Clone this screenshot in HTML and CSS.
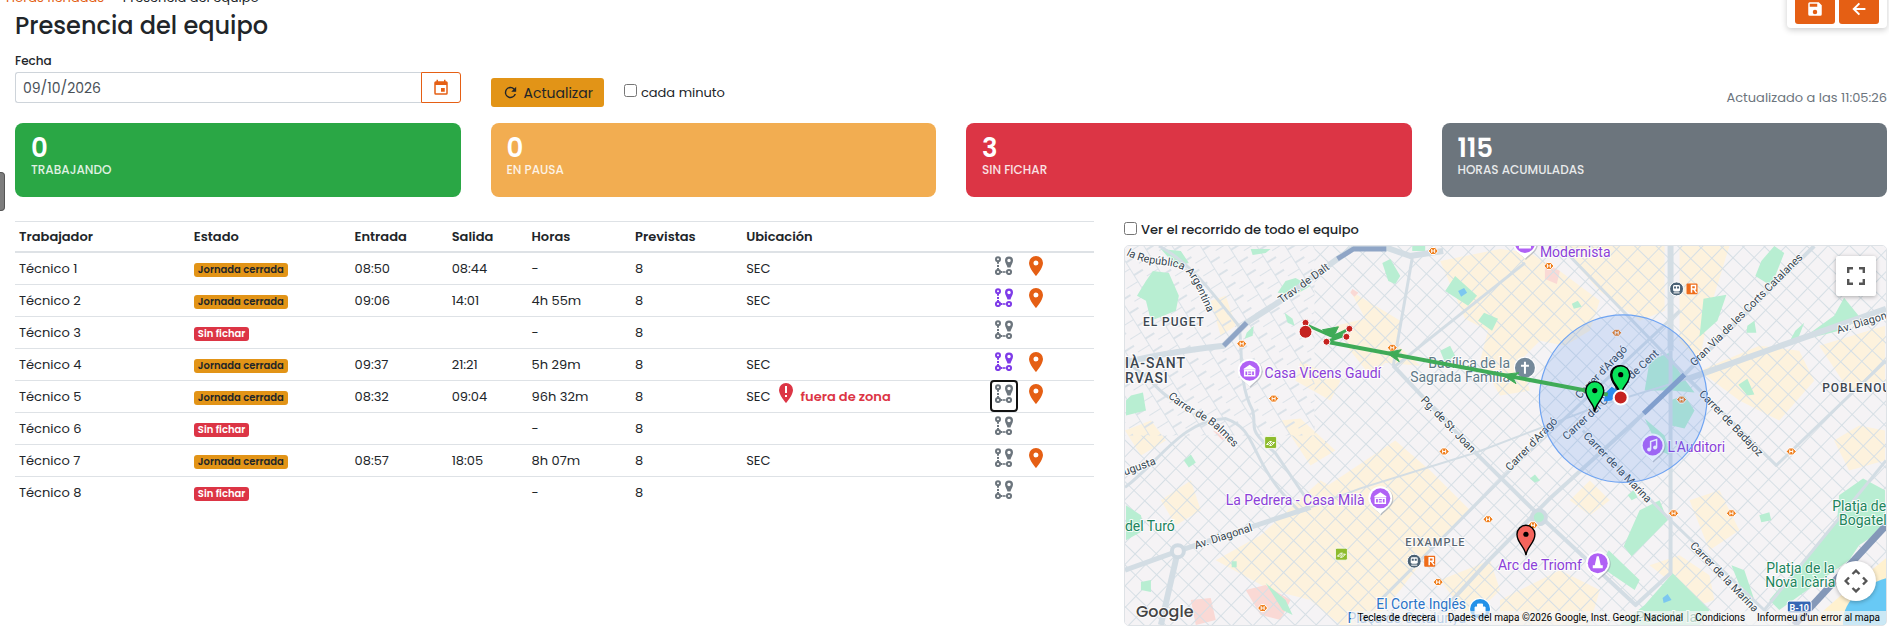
FILE: index.html
```html
<!DOCTYPE html>
<html lang="es">
<head>
<meta charset="utf-8">
<title>Presencia del equipo</title>
<link rel="stylesheet" href="styles.css">
</head>
<body>
<svg class="sprite" aria-hidden="true">
  <symbol id="i-pin" viewBox="5 2 14 20"><path fill="currentColor" d="M12 11.5A2.5 2.5 0 1 1 12 6.5a2.5 2.5 0 0 1 0 5M12 2a7 7 0 0 0-7 7c0 5.25 7 13 7 13s7-7.75 7-13a7 7 0 0 0-7-7z"/></symbol>
  <symbol id="i-alert" viewBox="5 2 14 20"><path fill="currentColor" d="M12 2a7 7 0 0 0-7 7c0 5.25 7 13 7 13s7-7.75 7-13a7 7 0 0 0-7-7z"/><path fill="#fff" d="M11 5h2v7h-2zM11 14h2v2h-2z"/></symbol>
  <symbol id="i-route" viewBox="0 0 18 19"><g fill="none" stroke="currentColor" stroke-width="2"><circle cx="3" cy="3.2" r="2"/><circle cx="3" cy="16" r="2.1"/><circle cx="14" cy="16" r="2.1"/><path d="M3 5.500v2.200M3 9v2M3 12v2M6 16h1.500M8.200 16h1.600M10.500 16h1.500" stroke-width="2"/></g><path fill="currentColor" fill-rule="evenodd" d="M14 0.4a4 4 0 0 0-4 4c0 2.600 2 4.200 2.500 7.200h3C16 8.600 18 7 18 4.400a4 4 0 0 0-4-4zm0 2.400a1.700 1.700 0 1 1 0 3.400 1.700 1.700 0 0 1 0-3.400z"/></symbol>
</svg>

<main class="page">
  <header class="head">
    <nav class="crumbs"><a href="#">Horas fichadas</a><span class="sep">·</span><span>Presencia del equipo</span></nav>
    <h1>Presencia del equipo</h1>
    <div class="toolbar">
      <button type="button" class="tool" aria-label="Guardar"><svg viewBox="0 0 24 24" width="18" height="18"><path fill="currentColor" d="M15 9H5V5h10m-3 14a3 3 0 1 1 0-6 3 3 0 0 1 0 6m5-16H5a2 2 0 0 0-2 2v14a2 2 0 0 0 2 2h14a2 2 0 0 0 2-2V7z"/></svg></button>
      <button type="button" class="tool" aria-label="Volver"><svg viewBox="0 0 24 24" width="18" height="18"><path fill="none" stroke="currentColor" stroke-width="2.600" d="M20.500 12H6M12.500 4.500 5 12l7.500 7.500"/></svg></button>
    </div>
  </header>

  <section class="grid filters">
    <div class="field">
      <label for="fecha">Fecha</label>
      <div class="date"><input id="fecha" type="text" value="09/10/2026"><button type="button" aria-label="Abrir calendario"><svg viewBox="0 0 24 24" width="18" height="18"><path fill="currentColor" d="M19 19H5V8h14m-3-7v2H8V1H6v2H5a2 2 0 0 0-2 2v14a2 2 0 0 0 2 2h14a2 2 0 0 0 2-2V5a2 2 0 0 0-2-2h-1V1m-1 11h-5v5h5z"/></svg></button></div>
    </div>
    <div class="refresh">
      <button type="button" class="btn"><svg viewBox="0 0 24 24" width="17" height="17"><path fill="currentColor" d="M17.650 6.350A8 8 0 1 0 19.730 14h-2.080A6 6 0 1 1 12 6c1.660 0 3.140.690 4.220 1.780L13 11h7V4z"/></svg>Actualizar</button>
      <label class="check"><input type="checkbox">cada minuto</label>
    </div>
    <p class="updated">Actualizado a las 11:05:26</p>
  </section>

  <section class="grid stats">
    <div class="stat green"><strong>0</strong><span>TRABAJANDO</span></div>
    <div class="stat amber"><strong>0</strong><span>EN PAUSA</span></div>
    <div class="stat red"><strong>3</strong><span>SIN FICHAR</span></div>
    <div class="stat gray"><strong>115</strong><span>HORAS ACUMULADAS</span></div>
  </section>

  <section class="content">
    <table class="team">
      <colgroup><col class="c-name"><col class="c-state"><col class="c-in"><col class="c-out"><col class="c-hours"><col class="c-plan"><col class="c-place"><col class="c-act"></colgroup>
      <thead><tr><th>Trabajador</th><th>Estado</th><th>Entrada</th><th>Salida</th><th>Horas</th><th>Previstas</th><th>Ubicación</th><th></th></tr></thead>
      <tbody>
        <tr><td>Técnico 1</td><td><span class="badge closed">Jornada cerrada</span></td><td>08:50</td><td>08:44</td><td>-</td><td>8</td><td>SEC</td><td class="acts"><button class="ico" aria-label="Recorrido"><svg class="route"><use href="#i-route"/></svg></button><button class="ico" aria-label="Ubicación"><svg class="pin"><use href="#i-pin"/></svg></button></td></tr>
        <tr><td>Técnico 2</td><td><span class="badge closed">Jornada cerrada</span></td><td>09:06</td><td>14:01</td><td>4h 55m</td><td>8</td><td>SEC</td><td class="acts"><button class="ico on" aria-label="Recorrido"><svg class="route"><use href="#i-route"/></svg></button><button class="ico" aria-label="Ubicación"><svg class="pin"><use href="#i-pin"/></svg></button></td></tr>
        <tr><td>Técnico 3</td><td><span class="badge none">Sin fichar</span></td><td></td><td></td><td>-</td><td>8</td><td></td><td class="acts"><button class="ico" aria-label="Recorrido"><svg class="route"><use href="#i-route"/></svg></button></td></tr>
        <tr><td>Técnico 4</td><td><span class="badge closed">Jornada cerrada</span></td><td>09:37</td><td>21:21</td><td>5h 29m</td><td>8</td><td>SEC</td><td class="acts"><button class="ico on" aria-label="Recorrido"><svg class="route"><use href="#i-route"/></svg></button><button class="ico" aria-label="Ubicación"><svg class="pin"><use href="#i-pin"/></svg></button></td></tr>
        <tr><td>Técnico 5</td><td><span class="badge closed">Jornada cerrada</span></td><td>08:32</td><td>09:04</td><td>96h 32m</td><td>8</td><td><span class="place">SEC<svg class="warn"><use href="#i-alert"/></svg><b>fuera de zona</b></span></td><td class="acts"><button class="ico focused" aria-label="Recorrido"><svg class="route"><use href="#i-route"/></svg></button><button class="ico" aria-label="Ubicación"><svg class="pin"><use href="#i-pin"/></svg></button></td></tr>
        <tr><td>Técnico 6</td><td><span class="badge none">Sin fichar</span></td><td></td><td></td><td>-</td><td>8</td><td></td><td class="acts"><button class="ico" aria-label="Recorrido"><svg class="route"><use href="#i-route"/></svg></button></td></tr>
        <tr><td>Técnico 7</td><td><span class="badge closed">Jornada cerrada</span></td><td>08:57</td><td>18:05</td><td>8h 07m</td><td>8</td><td>SEC</td><td class="acts"><button class="ico" aria-label="Recorrido"><svg class="route"><use href="#i-route"/></svg></button><button class="ico" aria-label="Ubicación"><svg class="pin"><use href="#i-pin"/></svg></button></td></tr>
        <tr><td>Técnico 8</td><td><span class="badge none">Sin fichar</span></td><td></td><td></td><td>-</td><td>8</td><td></td><td class="acts"><button class="ico" aria-label="Recorrido"><svg class="route"><use href="#i-route"/></svg></button></td></tr>
      </tbody>
    </table>

    <div class="side">
      <label class="check strong"><input type="checkbox">Ver el recorrido de todo el equipo</label>
      <div class="map">
        <svg class="canvas" viewBox="1124 245 763 380" preserveAspectRatio="xMidYMid slice">
          <defs>
            <pattern id="g1" width="15" height="15" patternUnits="userSpaceOnUse" patternTransform="rotate(44)"><path d="M0 0H15M0 0V15" stroke="#d6dfe5" stroke-width="2"/></pattern>
            <pattern id="g2" width="15" height="24" patternUnits="userSpaceOnUse" patternTransform="rotate(58)"><path d="M0 0H15M0 0V14M8 14V24" stroke="#dbe2e8" stroke-width="2"/></pattern>
            <path id="p-arg" d="M1125 254C1150 268 1172 260 1186 272C1195 281 1198 295 1212 322"/>
            <path id="p-balmes" d="M1167 396C1182 412 1200 416 1214 428C1222 435 1230 444 1242 456"/>
            <path id="p-diag" d="M1839 333L1920 308"/>
            <g id="poi"><path d="M0 16C-3 12-12 8-12 0A12 12 0 0 1 12 0C12 8 3 12 0 16z" fill="#8b93a0" opacity=".5" transform="translate(1 1)"/><path d="M0 16C-3 12-12 8-12 0A12 12 0 0 1 12 0C12 8 3 12 0 16z" fill="#fff"/><circle r="10" fill="#b061f5"/></g>
            <g id="museum" fill="#fff"><path d="M-6-2 0-6 6-2V-1H-6z"/><path d="M-5 0h10v5H-5z" fill="none" stroke="#fff" stroke-width="1.500"/><path d="M-2 0V5M2 0V5M-2 2.500H2" stroke="#fff"/></g>
            <g id="metro"><path d="M-5 0-2-3.500H2L5 0 2 3.500H-2z" fill="#ef7d1a" stroke="#fff"/><path d="M-1.500-2V2M1.500-2V2M-1.500 0H1.500" stroke="#fff"/></g>
            <g id="fgc"><rect x="-6" y="-6" width="12" height="12" rx="1.500" fill="#8ebc2d" stroke="#fff" stroke-width=".8"/><path d="M-4 2-1-1H1L-2 2zM-1 3 2 0H4L1 3z" fill="none" stroke="#fff"/></g>
            <g id="rail"><circle r="7" fill="#4a6174" stroke="#fff"/><rect x="-3.500" y="-4" width="7" height="6.500" rx="1.500" fill="#fff"/><path d="M-2.500-2.500h2v2h-2zM.5-2.500h2v2h-2z" fill="#4a6174"/><path d="M-3 4h6" stroke="#fff"/><rect x="10" y="-5.500" width="11" height="11" rx="1" fill="#ef6c1a"/><path d="M15-3.500h4v3.500h-4zM15-3.500V4M17 0l3 4" fill="none" stroke="#fff" stroke-width="1.500"/></g>
            <g id="marker"><path d="M0 0C-1-9-9-12-9-21A9 9 0 0 1 9-21C9-12 1-9 0 0z" stroke="#000" stroke-width="1.400"/><circle cy="-21" r="2.600" fill="#000"/></g>
          </defs>
          <rect x="1124" y="245" width="763" height="380" fill="#f5f3f5"/>
          <g fill="#fdf2dd">
            <path d="M1350 290 1375 305 1400 320 1398 345 1420 365 1385 362 1370 375 1350 350 1335 325 1365 318zM1300 360 1340 380 1330 400 1295 380zM1440 260 1500 248 1530 252 1560 270 1600 300 1590 330 1565 345 1540 340 1520 360 1530 390 1500 395 1480 360 1488 330 1465 318zM1560 245H1665V310L1640 320 1600 290zM1680 245H1730L1710 310 1700 360 1680 340zM1280 420 1300 418 1335 450 1310 465zM1320 480 1355 500 1400 505 1430 550 1400 590 1370 625H1340L1310 600 1270 590 1215 560 1260 535zM1290 510 1395 440 1430 470 1470 510 1440 540 1400 545 1340 540zM1124 430 1150 420 1165 440 1140 455zM1160 500 1190 480 1200 510 1175 525zM1440 580 1490 560 1500 590 1470 620zM1700 370 1760 345 1800 350 1815 380 1780 420 1740 400zM1820 345 1886 325V380L1850 390zM1835 440 1860 425 1886 430V460L1850 470zM1690 500 1720 490 1740 530 1710 550zM1500 600 1560 570 1600 590 1590 625H1500zM1650 565 1680 555 1710 575 1715 600 1700 605zM1210 300 1225 295 1235 325 1220 335zM1570 500 1590 480 1610 500 1590 515z"/>
          </g>
          <g fill="#fad9d5"><path d="M1245 590 1265 585 1290 600 1280 620 1260 615zM1190 600 1210 598 1215 620 1195 625zM1545 262 1560 270 1557 283 1545 278zM1352 288 1358 292 1354 296 1350 292zM1212 430 1225 435 1222 440z"/></g>
          <rect x="1124" y="245" width="190" height="190" fill="url(#g2)"/>
          <rect x="1314" y="245" width="573" height="380" fill="url(#g1)"/>
          <rect x="1124" y="435" width="190" height="190" fill="url(#g1)"/>
          <g fill="#b8eed2">
            <path d="M1145 280 1152 270 1168 272 1178 295 1175 310 1150 320 1145 300 1136 295zM1160 248 1180 250 1188 262 1175 265zM1285 280 1295 277 1310 285 1295 294 1277 292zM1250 248H1270L1265 252 1252 254zM1382 262 1390 258 1400 275 1395 283 1388 280zM1412 245H1425V250H1412zM1455 275 1477 295 1468 305 1445 290zM1478 320 1484 312 1498 318 1492 330zM1440 350 1450 345 1455 355 1445 362zM1130 395 1142 392 1145 410 1125 415V400zM1183 460 1190 454 1195 462 1188 467zM1125 505 1140 515 1143 530 1125 540zM1140 582 1150 580 1150 592 1140 590zM1284 312 1292 318 1294 325 1287 322zM1246 332 1253 325 1252 335 1244 338zM1231 561h5v6h-5z"/>
            <path d="M1762 260 1775 245 1785 252 1772 285 1756 275zM1704 298 1727 294 1718 320 1700 336zM1650 360 1670 352 1680 372 1695 392 1672 390 1645 390zM1835 315 1845 297 1862 318 1840 330 1800 340zM1670 400 1685 395 1695 410 1685 428 1672 425zM1645 418 1665 435 1671 455 1660 450zM1624 546 1640 510 1660 500 1668 520 1632 556zM1609 550 1640 580 1635 590 1600 566zM1645 605 1673 573 1710 610 1700 625H1620zM1732 565 1745 570 1755 600 1748 605zM1840 495 1864 478 1886 490V528L1860 545 1850 560 1780 610 1770 600 1838 520zM1739 384 1748 378 1755 394 1748 395zM1748 325 1755 320 1757 332 1747 332zM1760 515 1770 512 1772 520 1762 522zM1265 583 1285 600 1292 615 1282 610zM1530 478 1535 474 1540 480 1535 482zM1628 495 1634 490 1638 497 1632 500zM1572 303 1578 300 1582 306 1574 308zM1796 330 1805 322 1798 340 1788 345z"/>
          </g>
          <path d="M1808 625 1848 590 1887 558V625z" fill="#fff1cf"/><path d="M1844 625C1842 600 1865 585 1887 578V625z" fill="#68c9f5"/>
          <path d="M1458 290 1464 287 1467 292 1461 296zM1663 598 1668 594 1672 600 1664 603z" fill="#7cc7f0"/>
          <g fill="none" stroke="#d3dde4" stroke-width="4" stroke-linejoin="round">
            <path d="M1124 362C1150 355 1180 350 1223 345L1246 322 1280 300 1337 258 1353 247H1387L1410 255 1443 250" stroke-width="6"/>
            <path d="M1158 245C1190 262 1210 290 1238 325C1243 345 1236 380 1252 410C1257 430 1244 425 1275 453L1305 497" stroke-width="3"/>
            <path d="M1124 362C1150 375 1155 390 1170 398M1124 487C1160 460 1180 420 1225 418C1260 430 1245 460 1300 512" stroke-width="3"/>
            <path d="M1412 257 1393 365" stroke-width="3"/><path d="M1393 365 1476 453 1539 515 1636 605 1671 573V350"/>
            <path d="M1671 245V350" stroke-width="6"/>
            <path d="M1393 367 1525 262" stroke-width="3"/>
            <path d="M1124 570 1177 551 1310 507" stroke-width="5"/>
            <path d="M1310 507 1360 488 1476 452 1600 405 1689 378" stroke-width="2"/>
            <path d="M1689 378 1776 347 1887 308" stroke-width="6"/>
            <path d="M1432 622 1489 560 1548 500 1644 413 1689 370 1815 245"/>
            <path d="M1177 551 1160 625" stroke-width="6"/>
            <path d="M1380 600 1520 460 1680 310M1565 250 1689 378 1777 465 1887 360M1583 430 1671 520 1770 615M1887 460 1765 610" stroke-width="3"/>
            <path d="M1887 525 1795 625" stroke="#8498b8" stroke-width="7"/>
            <path d="M1223 345 1246 322M1337 258 1353 248H1386M1644 413 1685 374" stroke="#8fa5c6" stroke-width="5"/>
          </g>
          <circle cx="1177" cy="551" r="6" fill="#f4f2f4" stroke="#cfdae2" stroke-width="4"/><circle cx="1539" cy="517" r="7" fill="#b5ecd0" stroke="#cfdae2" stroke-width="4"/>

          <g class="street">
            <text><textPath href="#p-arg">la República Argentina</textPath></text>
            <text><textPath href="#p-balmes">Carrer de Balmes</textPath></text>
            <text transform="translate(1281 303) rotate(-36)">Trav. de Dalt</text>
            <text transform="translate(1124 475) rotate(-20)">ugusta</text>
            <text transform="translate(1195 549) rotate(-18)">Av. Diagonal</text>
            <text transform="translate(1420 400) rotate(46)">Pg. de St. Joan</text>
            <text transform="translate(1580 399) rotate(-46)">Carrer d'Aragó</text>
            <text transform="translate(1567 440) rotate(-43)">Carrer del Consell de Cent</text>
            <text transform="translate(1510 471) rotate(-46)">Carrer d'Aragó</text>
            <text transform="translate(1583 436) rotate(46)">Carrer de la Marina</text>
            <text transform="translate(1690 546) rotate(46)">Carrer de la Marina</text>
            <text transform="translate(1699 394) rotate(46)">Carrer de Badajoz</text>
            <text transform="translate(1695 366) rotate(-45)">Gran Via de les Corts Catalanes</text>
            <text><textPath href="#p-diag">Av. Diagonal</textPath></text>
          </g>
          <g class="area">
            <text x="1142" y="325">EL PUGET</text><text x="1124" y="367" class="big">IÀ-SANT</text><text x="1124" y="382" class="big">RVASI</text>
            <text x="1823" y="391">POBLENOU</text><text x="1405" y="546" class="small">EIXAMPLE</text>
          </g>
          <g class="purple">
            <text x="1264" y="377">Casa Vicens Gaudí</text><text x="1540" y="256">Modernista</text><text x="1668" y="452">L'Auditori</text>
            <text x="1225" y="505">La Pedrera - Casa Milà</text><text x="1498" y="570">Arc de Triomf</text>
          </g>
          <g class="slate"><text x="1428" y="367">Basílica de la</text><text x="1410" y="381">Sagrada Família</text></g>
          <g class="green-t"><text x="1124" y="531">del Turó</text><text x="1833" y="511">Platja de</text><text x="1840" y="525">Bogatell</text><text x="1767" y="573">Platja de la</text><text x="1766" y="587">Nova Icària</text><text x="1636" y="622">Parc de la</text></g>
          <g class="blue"><text x="1376" y="609">El Corte Inglés</text><text x="1347" y="623">Plaça de Catalunya</text></g>

          <use href="#poi" x="1249" y="370"/><use href="#museum" x="1249" y="370"/>
          <use href="#poi" x="1380" y="498"/><use href="#museum" x="1380" y="498"/>
          <use href="#poi" x="1525" y="242"/><path d="M1519 246h12" stroke="#fff" stroke-width="3"/>
          <use href="#poi" x="1653" y="445"/><path d="M1651 449V441L1657 439V447" fill="none" stroke="#fff" stroke-width="1.500"/><circle cx="1649.500" cy="449" r="2" fill="#fff"/><circle cx="1655.500" cy="447" r="2" fill="#fff"/>
          <use href="#poi" x="1598" y="563"/><path d="M1597 556h2l2 9h2v3h-10v-3h2z" fill="#fff"/>
          <circle cx="1525" cy="367" r="11" fill="#fff"/><circle cx="1525" cy="367" r="10" fill="#75899a"/><path d="M1525 361V373M1521 365H1529" stroke="#fff" stroke-width="2"/>
          <circle cx="1480" cy="609" r="11" fill="#fff"/><circle cx="1480" cy="609" r="10" fill="#2492e8"/><path d="M1475 607h10v7h-10zM1477.500 607v-3h5v3" fill="#fff" stroke="#fff"/>
          <use href="#metro" x="1433" y="250"/><use href="#metro" x="1241" y="343"/><use href="#metro" x="1392" y="347"/><use href="#metro" x="1273" y="398"/><use href="#metro" x="1444" y="451"/><use href="#metro" x="1488" y="519"/><use href="#metro" x="1438" y="582"/><use href="#metro" x="1262" y="608"/><use href="#metro" x="1549" y="265"/><use href="#metro" x="1617" y="332"/><use href="#metro" x="1682" y="399"/><use href="#metro" x="1792" y="451"/><use href="#metro" x="1674" y="513"/><use href="#metro" x="1732" y="513"/><use href="#metro" x="1533" y="525"/>
          <use href="#fgc" x="1270" y="442"/><use href="#fgc" x="1341" y="554"/>
          <use href="#rail" x="1677" y="288"/><use href="#rail" x="1414" y="561"/>
          <rect x="1788" y="601" width="24" height="12" rx="2" fill="#3567b4" stroke="#fff"/><text class="shield" x="1800" y="611">B-10</text>

          <circle cx="1623.500" cy="398" r="84" fill="#4285f4" fill-opacity=".17" stroke="#6fa4f2" stroke-width="1.200"/>
          <path d="M1606 392 1612 386 1618 390 1612 400 1604 401z" fill="#2b8df0"/>
          <g fill="#3fab57" stroke="#3fab57"><path d="M1608 394 1326 341" stroke-width="4"/><path d="M1308 325 1333 336 1349 328M1326 341 1345 334" fill="none" stroke-width="3"/><path d="M1386 352 1401 349 1396 355 1399 361zM1502 374 1519 372 1513 377 1516 383zM1322 329 1338 326 1334 334 1345 330 1336 337 1329 335z"/></g>
          <g fill="#c5221f" stroke="#fff"><circle cx="1305" cy="322" r="3.500"/><circle cx="1349" cy="328" r="3.500"/><circle cx="1346" cy="336" r="3.500"/><circle cx="1326" cy="341" r="3.500"/><circle cx="1305" cy="331" r="6.500"/></g>
          <use href="#marker" x="1620" y="395" fill="#000"/><use href="#marker" x="1621" y="395" fill="#0ae35a"/>
          <use href="#marker" x="1595" y="411" fill="#0ae35a"/>
          <circle cx="1621" cy="397" r="7" fill="#c5221f" stroke="#fff" stroke-width="2"/>
          <use href="#marker" x="1526" y="555" fill="#f5645c"/>
          <text class="brand" x="1135" y="617">Google</text>
        </svg>
        <button type="button" class="full" aria-label="Pantalla completa"><svg viewBox="0 0 18 18" width="18" height="18"><path fill="none" stroke="#555" stroke-width="2.400" d="M1.200 6V1.200H6M12 1.200h4.800V6M16.800 12v4.800H12M6 16.800H1.200V12"/></svg></button>
        <button type="button" class="pan" aria-label="Controles de cámara"><svg viewBox="0 0 24 24" width="24" height="24"><path fill="none" stroke="#555" stroke-width="2.400" d="M8.500 5 12 1.600 15.500 5M8.500 19l3.500 3.400 3.500-3.400M5 8.500 1.600 12 5 15.500M19 8.500l3.400 3.500-3.400 3.500"/></svg></button>
        <div class="legal"><a href="#">Tecles de drecera</a><span>Dades del mapa ©2026 Google, Inst. Geogr. Nacional</span><a href="#">Condicions</a><a href="#">Informeu d'un error al mapa</a></div>
      </div>
    </div>
  </section>
  <div class="handle"></div>
</main>
</body>
</html>
```
FILE: styles.css
```css
* { box-sizing: border-box; }
body { margin: 0; background: #fff; color: #212529; font-family: Poppins, Inter, "Open Sans", sans-serif; font-size: 13px; line-height: 20px; overflow: hidden; }
button, input { font: inherit; color: inherit; }
button { cursor: pointer; }
p, h1 { margin: 0; }
svg { display: block; }
.sprite { position: absolute; width: 0; height: 0; }
.page { padding: 0 2px 0 15px; }

.head { margin-top: -12px; }
.crumbs { display: flex; gap: 8px; margin-left: -9px; height: 18px; font-size: 13px; }
.crumbs a { color: #e35f15; text-decoration: none; }
.sep { color: #6c757d; }
h1 { font-size: 24px; line-height: 40px; font-weight: 500; }
.toolbar { position: absolute; top: -20px; right: 2px; display: flex; gap: 4px; padding: 8px 8px 4px; background: #fff; border-radius: 4px; box-shadow: 0 2px 6px rgba(0, 0, 0, .2); }
.tool { display: grid; place-items: end center; width: 40px; height: 36px; padding: 0 0 6px; border: 0; border-radius: 3px; background: #e55f14; color: #fff; }

.grid { display: grid; grid-template-columns: repeat(4, 1fr); column-gap: 30px; }
.filters { height: 64px; margin-top: 8px; }
.field label { display: block; height: 18px; font-size: 12px; line-height: 14px; font-weight: 500; }
.date { display: flex; height: 31px; }
.date input { flex: 1; min-width: 0; padding: 0 7px; border: 1px solid #ced4da; border-right: 0; border-radius: 3px 0 0 3px; font-size: 14px; color: #495057; }
.date button { display: grid; place-items: center; width: 40px; padding: 0; border: 1px solid #e55f14; border-radius: 0 3px 3px 0; background: #fff; color: #e55f14; }
.refresh { display: flex; align-items: center; gap: 20px; height: 29px; margin-top: 24px; }
.btn { display: flex; align-items: center; gap: 5px; height: 29px; padding: 0 11px; border: 0; border-radius: 3px; background: #e29417; font-size: 14px; }
.check { display: flex; align-items: center; gap: 4px; }
.check input { width: 13px; height: 13px; margin: 0 0 4px; }
.updated { grid-column: 4; align-self: end; padding-bottom: 10px; text-align: right; color: #6c757d; }

.stats { margin-top: 5px; }
.stat { height: 74px; padding: 12px 16px; border-radius: 8px; color: #fff; }
.stat strong { display: block; font-size: 26px; line-height: 26px; font-weight: 600; }
.stat span { display: block; font-size: 12px; line-height: 18px; font-weight: 500; opacity: .85; }
.green { background: #2aa745; }
.amber { background: #f2ad51; }
.red { background: #dc3545; }
.gray { background: #6c757d; }

.content { display: grid; grid-template-columns: 1079fr 763fr; column-gap: 30px; margin-top: 24px; align-items: start; }
.team { width: 100%; table-layout: fixed; border-collapse: separate; border-spacing: 0; }
.c-name { width: 16.2%; }
.c-state { width: 14.9%; }
.c-in { width: 9%; }
.c-out { width: 7.4%; }
.c-hours { width: 9.6%; }
.c-plan { width: 10.3%; }
.c-place { width: 23.1%; }
.team th { height: 32px; padding: 0 4px; border-top: 1px solid #dee2e6; border-bottom: 2px solid #dee2e6; text-align: left; font-weight: 600; }
.team td { height: 32px; padding: 0 4px; border-bottom: 1px solid #dee2e6; white-space: nowrap; }
.team tr:last-child td { border-bottom: 0; }
.badge { display: inline-block; padding: 0 4px; border-radius: 3px; font-size: 10px; line-height: 14px; font-weight: 600; }
.closed { background: #e29417; }
.none { background: #dc3545; color: #fff; }
.team .acts { padding: 0; vertical-align: top; }
.ico { display: inline-flex; justify-content: center; float: left; width: 26px; height: 30px; margin-right: 6px; padding: 3px 0 0; border: 0; border-radius: 3px; background: none; color: #6c757d; }
.ico.on { color: #7e3be8; }
.focused { outline: 2px solid #111; outline-offset: -1px; }
.route { width: 18px; height: 19px; }
.pin { width: 14px; height: 20px; color: #e55f14; }
.place { display: flex; align-items: center; gap: 8px; }
.place svg { width: 14px; height: 20px; margin-bottom: 8px; color: #dc3545; }
.place b { color: #dc3545; font-weight: 600; }

.strong { height: 18px; font-weight: 500; }
.map { position: relative; height: 381px; margin-top: 6px; border: 1px solid #dee2e6; border-radius: 5px; overflow: hidden; }
.canvas { width: 100%; height: 100%; font-family: Roboto, sans-serif; }
.canvas text { paint-order: stroke; stroke: #fff; stroke-width: 2px; stroke-opacity: .85; }
.street { font-size: 11px; fill: #36454f; }
.area { font-size: 12px; font-weight: 500; letter-spacing: 1px; fill: #3c4650; }
.big { font-size: 14px; }
.small { font-size: 11px; fill: #596773; }
.purple { font-size: 14px; fill: #8b40d8; }
.slate { font-size: 14px; fill: #607887; }
.green-t { font-size: 14px; fill: #20845c; }
.blue { font-size: 14px; fill: #2b74c8; }
.canvas .shield { font-size: 9px; font-weight: 700; fill: #fff; stroke: none; text-anchor: middle; }
.brand { font-family: Poppins, Lato, sans-serif; font-size: 16px; font-weight: 500; fill: #444; }
.full, .pan { position: absolute; right: 10px; display: grid; place-items: center; width: 40px; height: 40px; padding: 0; border: 0; background: #fff; box-shadow: 0 1px 4px rgba(0, 0, 0, .3); }
.full { top: 10px; border-radius: 2px; }
.pan { bottom: 24px; border-radius: 50%; }
.legal { position: absolute; right: 0; bottom: 0; display: flex; height: 14px; font: 10px/14px Roboto, sans-serif; color: #000; white-space: nowrap; }
.legal > * { padding: 0 6px; background: rgba(245, 245, 245, .7); color: inherit; text-decoration: none; }
.handle { position: absolute; left: 0; top: 172px; width: 5px; height: 39px; border-radius: 0 4px 4px 0; background: #7d7d7d; border: 1px solid #555; border-left: 0; }
```
